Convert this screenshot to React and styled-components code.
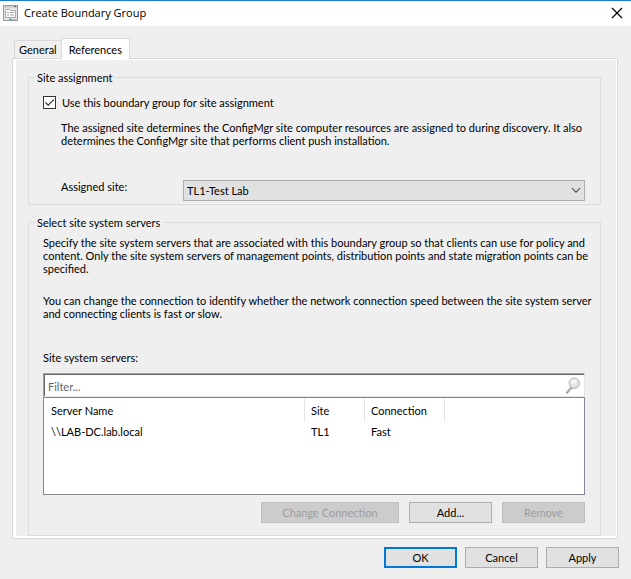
import React, { useState } from 'react'
import styled, { createGlobalStyle } from 'styled-components'

const GlobalStyle = createGlobalStyle`
  * {
    box-sizing: border-box;
  }
  body {
    margin: 0;
    background: #efefef;
    color: #000;
    font-family: Lato, "Liberation Sans", sans-serif;
    font-size: 11px;
    line-height: 13px;
  }
  button, input, select {
    font: inherit;
    color: inherit;
  }
`

const Dialog = styled.main`
  min-height: 100vh;
  border-top: 1px solid #1a7fd4;
  background: #efefef;
`
const TitleBar = styled.header`
  display: flex;
  align-items: center;
  height: 25px;
  padding: 0 8px 2px 3px;
  gap: 5px;
  background: #fff;
`
const Title = styled.h1`
  flex: 1;
  margin: 0;
  font-family: "Open Sans", "Noto Sans", sans-serif;
  font-size: 11px;
  font-weight: 400;
  line-height: 14px;
`
const CloseButton = styled.button`
  display: flex;
  padding: 0;
  border: 0;
  background: none;
`
const Content = styled.div`
  padding: 12px 12px 0;
`
const Tabs = styled.div`
  display: flex;
  align-items: flex-end;
  padding-left: 2px;
`
const Tab = styled.button`
  height: ${props => (props.$active ? 21 : 18)}px;
  margin-bottom: ${props => (props.$active ? -1 : 0)}px;
  padding: 0 ${props => (props.$active ? 7 : 4)}px;
  border: 1px solid #d9d9d9;
  border-bottom: 0;
  border-right-width: ${props => (props.$active ? 1 : 0)}px;
  background: ${props => (props.$active ? '#fff' : '#efefef')};
  z-index: ${props => (props.$active ? 1 : 0)};
`
const TabPage = styled.div`
  margin-right: 1px;
  border: 1px solid #d9d9d9;
  background: #efefef;
  box-shadow: inset 3px 1px 0 #fff, inset -1px -2px 0 #fff;
  padding: 12px 16px 2px 15px;
`
const Group = styled.fieldset`
  min-width: 0;
  margin: 0;
  padding: ${props => props.$pad};
  border: 1px solid #dcdcdc;

  & + & {
    margin-top: 11px;
  }
`
const Legend = styled.legend`
  margin-left: ${props => props.$indent}px;
  padding: 0 2px;
`
const CheckLabel = styled.label`
  display: flex;
  align-items: center;
  gap: 6px;
`
const CheckBox = styled.input`
  appearance: none;
  width: 13px;
  height: 13px;
  margin: 0;
  border: 1px solid #333;
  background: #fff;

  &:checked {
    background: #fff url("data:image/svg+xml,%3Csvg xmlns='http://www.w3.org/2000/svg' viewBox='0 0 11 11'%3E%3Cpath d='M1.5 5.5 4.2 8.2 9.8 2.6' fill='none' stroke='%23333' stroke-width='1.3'/%3E%3C/svg%3E");
  }
`
const Text = styled.p`
  margin: 0 -12px ${props => props.$space || 0}px 0;
`
const Indented = styled.div`
  padding: 12px 0 0 18px;
`
const SiteRow = styled.div`
  display: flex;
  align-items: flex-start;
`
const SiteLabel = styled.label`
  width: 122px;
`
const SelectBox = styled.div`
  position: relative;
  flex: 1;

  svg {
    position: absolute;
    right: 4px;
    top: 7px;
    pointer-events: none;
  }
`
const Select = styled.select`
  appearance: none;
  display: block;
  width: 100%;
  height: 21px;
  padding: 0 20px 0 3px;
  border: 1px solid #acacac;
  border-radius: 0;
  background: #e1e1e1;
`
const FilterBox = styled.div`
  position: relative;
  margin-top: 9px;

  svg {
    position: absolute;
    right: 4px;
    top: 4px;
  }
`
const FilterInput = styled.input`
  display: block;
  width: 100%;
  height: 24px;
  padding: 3px 24px 0 4px;
  border: 1px solid;
  border-color: #a0a0a0 #e3e3e3 #e3e3e3 #a0a0a0;
  box-shadow: inset 1px 1px 0 #696969;
  outline: 0;
  background: #fff;

  &::placeholder {
    color: #666;
    opacity: 1;
  }
`
const ListBox = styled.div`
  height: 98px;
  padding: 0 0 0 1px;
  border: 1px solid #828790;
  background: #fff;
  overflow: auto;
`
const Table = styled.table`
  width: 100%;
  border-collapse: separate;
  border-spacing: 0;
  table-layout: fixed;
`
const HeadCell = styled.th`
  width: ${props => (props.$width ? props.$width + 'px' : 'auto')};
  height: 24px;
  padding: 0 0 0 6px;
  border-right: ${props => (props.$width ? '1px solid #e5e5e5' : '0')};
  font-weight: 400;
  text-align: left;
`
const Cell = styled.td`
  height: 18px;
  padding: 0 0 0 6px;
`
const ButtonRow = styled.div`
  display: flex;
  justify-content: flex-end;
  gap: ${props => props.$gap}px;
  padding: ${props => props.$pad};
`
const Button = styled.button`
  width: ${props => props.$width}px;
  height: 21px;
  padding: 0;
  border: ${props => (props.$primary ? '2px solid #0078d7' : '1px solid #adadad')};
  background: #e1e1e1;

  &:disabled {
    border-color: #bfbfbf;
    background: #ccc;
    color: #9c9c9c;
  }
`

const FormIcon = () => (
  <svg width="16" height="16" viewBox="0 0 16 16" fill="none">
    <rect x="0.5" y="0.5" width="14" height="15" fill="#e6e6e6" stroke="#999" />
    <path d="M1 2h13" stroke="#bbb" />
    <path d="M11 1.5h2" stroke="#666" />
    <path d="M2.5 5.5v7h10v-7h-5l-1-1h-4z" fill="#fff" stroke="#aaa" />
    <path d="M4 7.5h2M7 7.5h4M4 10h2M7 10h4" stroke="#a4a4a4" />
    <path d="M6 14.5h3" stroke="#25b5ea" strokeWidth="1.6" />
    <path d="M10 14.5h3" stroke="#a9bcc4" />
  </svg>
)

const CloseIcon = () => (
  <svg width="12" height="12" viewBox="0 0 12 12">
    <path d="M1 1l10 10M11 1L1 11" stroke="#000" strokeWidth="1.2" />
  </svg>
)

const ChevronIcon = () => (
  <svg width="10" height="7" viewBox="0 0 10 7">
    <path d="M1 1.2l4 4 4-4" fill="none" stroke="#555" strokeWidth="1.2" />
  </svg>
)

const SearchIcon = () => (
  <svg width="16" height="18" viewBox="0 0 16 18">
    <path d="M2 15.5L6.5 10.5" stroke="#a0a0a0" strokeWidth="2.4" strokeLinecap="round" />
    <path d="M2.2 14.8L6 10.6" stroke="#d4d4d4" strokeWidth="0.8" />
    <circle cx="9.3" cy="6.2" r="5.2" fill="#e2e2e2" stroke="#b0b0b0" />
    <ellipse cx="8.8" cy="4.8" rx="3" ry="2.4" fill="#f3f3f3" />
  </svg>
)

const servers = [
  { name: '\\\\LAB-DC.lab.local', site: 'TL1', connection: 'Fast' }
]

export default function App() {
  const [assign, setAssign] = useState(true)
  const [filter, setFilter] = useState('')

  const shown = servers.filter(s => s.name.toLowerCase().includes(filter.toLowerCase()))

  return (
    <Dialog>
      <GlobalStyle />
      <TitleBar>
        <FormIcon />
        <Title>Create Boundary Group</Title>
        <CloseButton aria-label="Close"><CloseIcon /></CloseButton>
      </TitleBar>
      <Content>
        <Tabs role="tablist">
          <Tab role="tab" aria-selected="false">General</Tab>
          <Tab role="tab" aria-selected="true" $active>References</Tab>
        </Tabs>
        <TabPage role="tabpanel">
          <Group $pad="12px 15px 3px 14px">
            <Legend $indent={-8}>Site assignment</Legend>
            <CheckLabel>
              <CheckBox type="checkbox" checked={assign} onChange={e => setAssign(e.target.checked)} />
              Use this boundary group for site assignment
            </CheckLabel>
            <Indented>
              <Text $space={33}>
                The assigned site determines the ConfigMgr site computer resources are assigned to during discovery. It also determines the ConfigMgr site that performs client push installation.
              </Text>
              <SiteRow>
                <SiteLabel htmlFor="site">Assigned site:</SiteLabel>
                <SelectBox>
                  <Select id="site" disabled={!assign}>
                    <option>TL1-Test Lab</option>
                  </Select>
                  <ChevronIcon />
                </SelectBox>
              </SiteRow>
            </Indented>
          </Group>
          <Group $pad="7px 15px 12px 14px">
            <Legend $indent={-8}>Select site system servers</Legend>
            <Text $space={19}>
              Specify the site system servers that are associated with this boundary group so that clients can use for policy and content. Only the site system servers of management points, distribution points and state migration points can be specified.
            </Text>
            <Text $space={31}>
              You can change the connection to identify whether the network connection speed between the site system server and connecting clients is fast or slow.
            </Text>
            <label htmlFor="filter">Site system servers:</label>
            <FilterBox>
              <FilterInput id="filter" placeholder="Filter..." value={filter} onChange={e => setFilter(e.target.value)} />
              <SearchIcon />
            </FilterBox>
            <ListBox>
              <Table>
                <thead>
                  <tr>
                    <HeadCell $width={260}>Server Name</HeadCell>
                    <HeadCell $width={60}>Site</HeadCell>
                    <HeadCell $width={80}>Connection</HeadCell>
                    <HeadCell as="td" />
                  </tr>
                </thead>
                <tbody>
                  {shown.map(s => (
                    <tr key={s.name}>
                      <Cell>{s.name}</Cell>
                      <Cell>{s.site}</Cell>
                      <Cell>{s.connection}</Cell>
                      <Cell />
                    </tr>
                  ))}
                </tbody>
              </Table>
            </ListBox>
            <ButtonRow $gap={10} $pad="7px 0 0">
              <Button $width={138} disabled>Change Connection</Button>
              <Button $width={83}>Add...</Button>
              <Button $width={83} disabled>Remove</Button>
            </ButtonRow>
          </Group>
        </TabPage>
        <ButtonRow $gap={8} $pad="8px 0 8px">
          <Button $width={73} $primary>OK</Button>
          <Button $width={73}>Cancel</Button>
          <Button $width={73}>Apply</Button>
        </ButtonRow>
      </Content>
    </Dialog>
  )
}
